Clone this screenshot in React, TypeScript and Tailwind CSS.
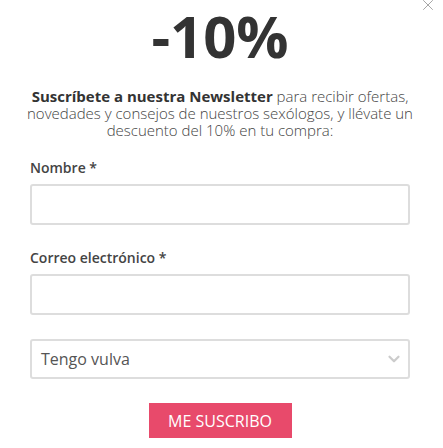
import { ChevronDown, X } from "lucide-react";

const App = () => {
  return (
    <div className="relative h-[448px] w-[443px] overflow-hidden bg-white font-['Open_Sans',sans-serif] text-[#444]">
      <button className="absolute right-[6px] top-[-4px] text-[#888]">
        <X size={18} strokeWidth={1} />
      </button>
      <div className="w-[440px]">
        <h1 className="pt-[4px] text-center text-[58px] font-bold leading-[64px] text-[#333]">-10%</h1>
        <p className="mt-[20px] px-[14px] text-center text-[15px] font-light leading-[17px] text-[#444]">
          <span className="font-bold text-[#333]">Suscríbete a nuestra Newsletter</span> para recibir ofertas,
          novedades y consejos de nuestros sexólogos, y llévate un descuento del 10% en tu compra:
        </p>
      </div>
      <form className="ml-[30px] mt-[20px] flex w-[380px] flex-col">
        <label className="text-[14px] font-semibold leading-[18px] text-[#444]">Nombre *</label>
        <input className="mt-[7px] h-[41px] rounded-[3px] border-2 border-[#ddd] px-[10px] outline-none" />
        <label className="mt-[24px] text-[14px] font-semibold leading-[18px] text-[#444]">
          Correo electrónico *
        </label>
        <input className="mt-[7px] h-[41px] rounded-[3px] border-2 border-[#ddd] px-[10px] outline-none" />
        <div className="mt-[24px] flex h-[40px] items-center justify-between rounded-[3px] border-2 border-[#ddd] pl-[9px] pr-[5px]">
          <span className="text-[16px] text-[#555]">Tengo vulva</span>
          <ChevronDown size={18} strokeWidth={3} className="text-[#ccc]" />
        </div>
        <div className="mt-[24px] flex justify-center">
          <button className="h-[35px] w-[143px] bg-[#e84a6b] text-[16px] text-white">ME SUSCRIBO</button>
        </div>
      </form>
    </div>
  );
};

export default App;
